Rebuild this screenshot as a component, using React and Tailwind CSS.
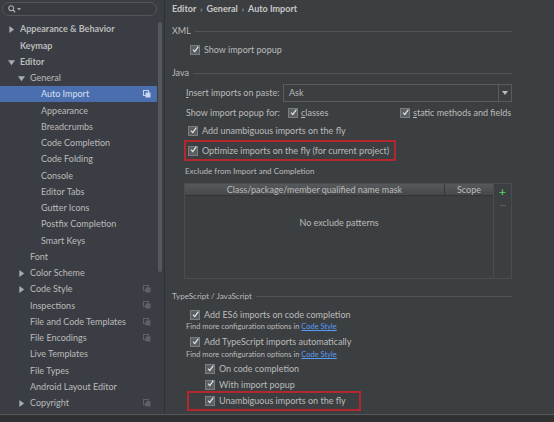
import React from 'react';

// Settings tree on the left
const TREE = [
  { label: 'Appearance & Behavior', level: 0, arrow: 'right', bold: true },
  { label: 'Keymap', level: 0, bold: true },
  { label: 'Editor', level: 0, arrow: 'down', bold: true },
  { label: 'General', level: 1, arrow: 'down' },
  { label: 'Auto Import', level: 2, selected: true, badge: true },
  { label: 'Appearance', level: 2 },
  { label: 'Breadcrumbs', level: 2 },
  { label: 'Code Completion', level: 2 },
  { label: 'Code Folding', level: 2 },
  { label: 'Console', level: 2 },
  { label: 'Editor Tabs', level: 2 },
  { label: 'Gutter Icons', level: 2 },
  { label: 'Postfix Completion', level: 2 },
  { label: 'Smart Keys', level: 2 },
  { label: 'Font', level: 1 },
  { label: 'Color Scheme', level: 1, arrow: 'right' },
  { label: 'Code Style', level: 1, arrow: 'right', badge: true },
  { label: 'Inspections', level: 1, badge: true },
  { label: 'File and Code Templates', level: 1, badge: true },
  { label: 'File Encodings', level: 1, badge: true },
  { label: 'Live Templates', level: 1 },
  { label: 'File Types', level: 1 },
  { label: 'Android Layout Editor', level: 1 },
  { label: 'Copyright', level: 1, arrow: 'right', badge: true },
];

const Arrow = ({ dir }) => (
  <svg width="7" height="7" viewBox="0 0 8 8" className="shrink-0">
    {dir === 'down'
      ? <path d="M0 1.5h8L4 7z" fill="#a9abad" />
      : <path d="M1.5 0v8L7 4z" fill="#a9abad" />}
  </svg>
);

const ProjectBadge = ({ active }) => (
  <svg width="8" height="8" viewBox="0 0 8 8">
    <rect x="0.5" y="0.5" width="5" height="5" fill="none" stroke={active ? '#c9d6ef' : '#5f6264'} />
    <rect x="2.5" y="2.5" width="5" height="5" fill={active ? '#c9d6ef' : '#5f6264'} />
  </svg>
);

const TreeRow = ({ item }) => {
  const textLeft = [20, 30, 41][item.level];
  return (
    <div
      className={`relative flex items-center h-[16.26px] ${item.selected ? 'bg-[#4b6eaf] text-[#d7e0f1]' : 'text-[#bbbbbb]'}`}
    >
      {item.arrow && (
        <span className="absolute top-[5px]" style={{ left: textLeft - 12 }}>
          <Arrow dir={item.arrow} />
        </span>
      )}
      <span className={`whitespace-nowrap ${item.bold ? 'font-bold' : ''}`} style={{ paddingLeft: textLeft }}>
        {item.label}
      </span>
      {item.badge && (
        <span className="absolute right-[6px] top-[4px]">
          <ProjectBadge active={item.selected} />
        </span>
      )}
    </div>
  );
};

const Check = () => (
  <span className="inline-flex items-center justify-center w-[10px] h-[10px] bg-[#5c5f61] border border-[#7b7e80] shrink-0">
    <svg width="9" height="9" viewBox="0 0 10 10" className="-mt-[2px] ml-[1px]">
      <path d="M1.5 5.2 4 8 9 1" fill="none" stroke="#e8e8e8" strokeWidth="1.7" />
    </svg>
  </span>
);

const CheckRow = ({ children, indent = 0, className = '' }) => (
  <div className={`flex items-center gap-[4px] ${className}`} style={{ paddingLeft: indent }}>
    <Check />
    <span className="whitespace-nowrap">{children}</span>
  </div>
);

const Section = ({ title, className = '' }) => (
  <div className={`flex items-center gap-[4px] h-[14px] text-[#bbbbbb] ${className}`}>
    <span className="whitespace-nowrap">{title}</span>
    <div className="flex-1 h-px bg-[#515557]" />
  </div>
);

const FindMore = () => (
  <div className="h-[10px] pl-[14px] text-[7.5px] text-[#bbbbbb] whitespace-nowrap flex items-center">
    Find more configuration options in&nbsp;
    <span className="text-[#589df6] underline">Code Style</span>
  </div>
);

export default function App() {
  return (
    <div
      className="w-[554px] h-[422px] flex flex-col bg-[#3c3f41] text-[#bbbbbb] text-[9px] overflow-hidden"
      style={{ fontFamily: 'Lato, "Noto Sans", sans-serif' }}
    >
      <div className="flex flex-1 min-h-0">
        {/* Sidebar */}
        <div className="relative w-[165px] shrink-0 bg-[#3a3d43] border-r border-[#2f3133]">
          <div className="mx-[2px] mt-[2px] h-[14px] w-[155px] rounded-full bg-[#393b40] border border-[#54575a] flex items-center pl-[5px] gap-[1px]">
            <svg width="8" height="8" viewBox="0 0 10 10">
              <circle cx="4" cy="4" r="3" fill="none" stroke="#a9abad" strokeWidth="1.4" />
              <path d="M6.2 6.2 9 9" stroke="#a9abad" strokeWidth="1.6" />
            </svg>
            <svg width="4" height="4" viewBox="0 0 4 4">
              <path d="M0 1h4L2 3.5z" fill="#a9abad" />
            </svg>
          </div>
          <div className="mt-[5px] pr-[7px]">
            {TREE.map((item) => (
              <TreeRow key={item.label} item={item} />
            ))}
          </div>
          {/* vertical scrollbar */}
          <div className="absolute right-[2px] top-[22px] w-[4px] h-[250px] rounded-sm bg-[#55585c]" />
        </div>

        {/* Content */}
        <div className="flex-1 min-w-0 pl-[7px] pr-[42px] pt-[2px]">
          <div className="h-[14px] flex items-center font-bold text-[#c8c8c8] whitespace-nowrap">
            Editor <span className="mx-[4px] font-normal text-[8px]">›</span> General
            <span className="mx-[4px] font-normal text-[8px]">›</span> Auto Import
          </div>

          <Section title="XML" className="mt-[8px]" />
          <CheckRow indent={18} className="mt-[5px] h-[14px]">Show import popup</CheckRow>

          <Section title="Java" className="mt-[9px]" />
          <div className="mt-[4px] flex items-center h-[18px] pl-[14px]">
            <span className="w-[97px] shrink-0 whitespace-nowrap"><span className="underline">I</span>nsert imports on paste:</span>
            <div className="flex-1 h-[18px] flex border border-[#5a5d60] bg-[#3c3f41]">
              <span className="flex-1 pl-[5px] flex items-center">Ask</span>
              <span className="w-[13px] border-l border-[#5a5d60] flex items-center justify-center">
                <svg width="6" height="4" viewBox="0 0 6 4"><path d="M0 0h6L3 4z" fill="#bbbbbb" /></svg>
              </span>
            </div>
          </div>
          <div className="mt-[3px] flex items-center h-[16px] pl-[14px]">
            <span className="w-[102px] shrink-0 whitespace-nowrap">Show import popup for:</span>
            <Check />
            <span className="ml-[3px] w-[99px] shrink-0"><span className="underline">c</span>lasses</span>
            <Check />
            <span className="ml-[3px] whitespace-nowrap"><span className="underline">s</span>tatic methods and fields</span>
          </div>
          <CheckRow indent={16} className="mt-[2px] h-[16px]">Add unambiguous imports on the fly</CheckRow>
          <div className="mt-[1px] ml-[12px] w-[212px] h-[21px] border-2 border-[#b5272e] flex items-center pl-[2px]">
            <Check />
            <span className="ml-[4px] whitespace-nowrap">Optimize imports on the fly (for current project)</span>
          </div>

          <div className="mt-[3px] pl-[13px] h-[14px] flex items-center text-[8px] whitespace-nowrap">
            Exclude from Import and Completion
          </div>
          <div className="mt-[5px] ml-[12px] h-[96px] flex border border-[#4a4d50]">
            <div className="flex-1 flex flex-col bg-[#3c3f41]">
              <div className="h-[12px] flex bg-gradient-to-b from-[#56595b] to-[#46494b] border-b border-[#323436]">
                <span className="flex-1 flex items-center justify-center whitespace-nowrap">Class/package/member qualified name mask</span>
                <span className="w-[49px] border-l border-[#35383a] flex items-center justify-center">Scope</span>
              </div>
              <div className="flex-1 flex items-center justify-center pb-[28px]">No exclude patterns</div>
            </div>
            <div className="w-[18px] border-l border-[#4a4d50] flex flex-col items-center pt-[2px] gap-[8px]">
              <span className="text-[#55c05a] font-bold text-[12px] leading-[11px]">+</span>
              <span className="w-[6px] h-px bg-[#5c5f61]" />
            </div>
          </div>

          <Section title="TypeScript / JavaScript" className="mt-[10px] text-[8px]" />
          <CheckRow indent={18} className="mt-[5px] h-[14px]">Add ES6 imports on code completion</CheckRow>
          <FindMore />
          <CheckRow indent={18} className="mt-[2px] h-[16px]">Add TypeScript imports automatically</CheckRow>
          <FindMore />
          <CheckRow indent={33} className="mt-[1px] h-[16px]">On code completion</CheckRow>
          <CheckRow indent={33} className="h-[15px]">With import popup</CheckRow>
          <div className="-mt-[1px] ml-[15px] w-[174px] h-[20px] border-2 border-[#b5272e] flex items-center pl-[16px]">
            <Check />
            <span className="ml-[4px] whitespace-nowrap">Unambiguous imports on the fly</span>
          </div>
        </div>
      </div>
      {/* bottom strip */}
      <div className="h-[8px] shrink-0 bg-[#2f3133] border-t border-[#55585b]" />
    </div>
  );
}
